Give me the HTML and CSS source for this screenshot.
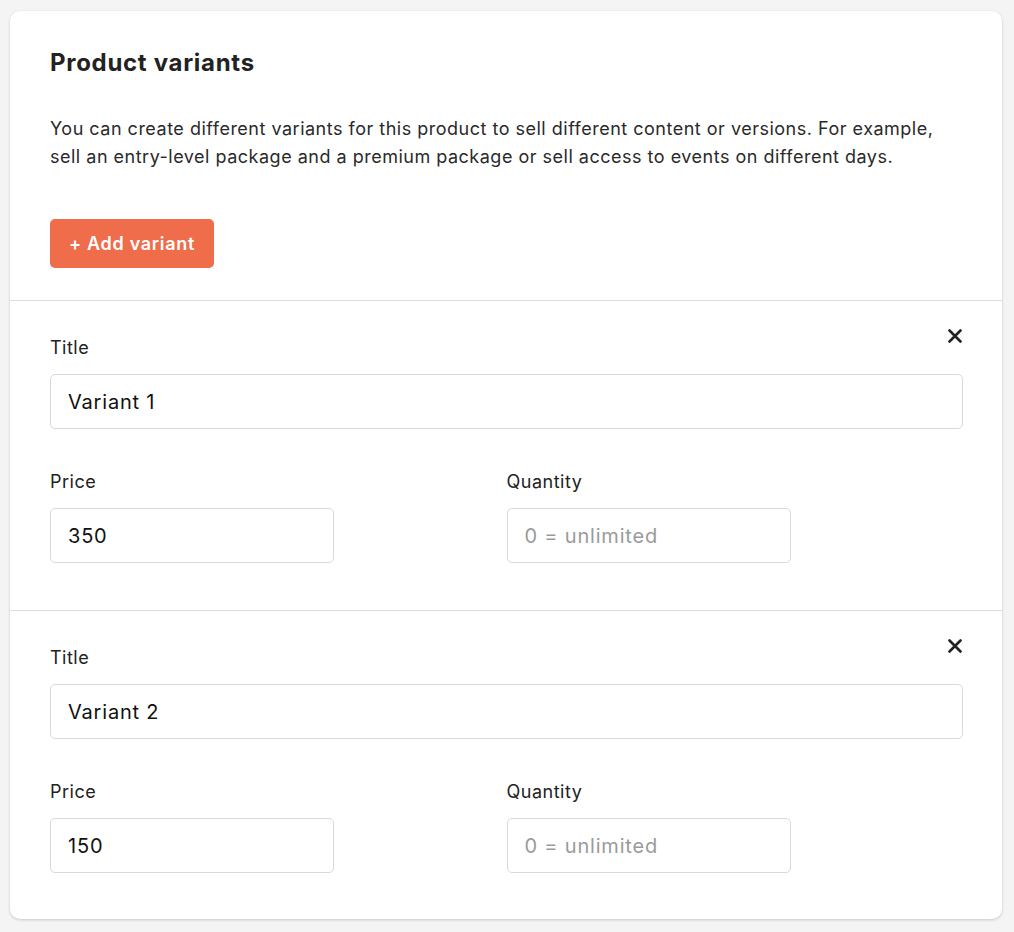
FILE: index.html
```html
<!DOCTYPE html>
<html lang="en">
<head>
    <meta charset="UTF-8">
    <meta name="viewport" content="width=device-width, initial-scale=1.0">
    <title>Product variants</title>
    <link rel="stylesheet" href="styles.css">
</head>
<body>
    <div class="card">
        <div class="card_head">
            <h2>Product variants</h2>
            <p>You can create different variants for this product to sell different content or versions. For example, sell an entry-level package and a premium package or sell access to events on different days.</p>
            <button class="add_btn">+ Add variant</button>
        </div>
        <div class="variant">
            <button class="remove_btn" aria-label="Remove">
                <svg width="14" height="14" viewBox="0 0 14 14"><path d="M1.5 1.5 L12.5 12.5 M12.5 1.5 L1.5 12.5" stroke="#222" stroke-width="2.6" stroke-linecap="round"/></svg>
            </button>
            <label class="field_label">Title</label>
            <input class="field" type="text" value="Variant 1">
            <div class="row">
                <div class="col">
                    <label class="field_label">Price</label>
                    <input class="field small" type="text" value="350">
                </div>
                <div class="col">
                    <label class="field_label">Quantity</label>
                    <input class="field small" type="text" placeholder="0 = unlimited">
                </div>
            </div>
        </div>
        <div class="variant">
            <button class="remove_btn" aria-label="Remove">
                <svg width="14" height="14" viewBox="0 0 14 14"><path d="M1.5 1.5 L12.5 12.5 M12.5 1.5 L1.5 12.5" stroke="#222" stroke-width="2.6" stroke-linecap="round"/></svg>
            </button>
            <label class="field_label">Title</label>
            <input class="field" type="text" value="Variant 2">
            <div class="row">
                <div class="col">
                    <label class="field_label">Price</label>
                    <input class="field small" type="text" value="150">
                </div>
                <div class="col">
                    <label class="field_label">Quantity</label>
                    <input class="field small" type="text" placeholder="0 = unlimited">
                </div>
            </div>
        </div>
    </div>
</body>
</html>
```
FILE: styles.css
```css
*{margin:0; padding:0; box-sizing: border-box;}
body{
    background-color: #f4f4f4;
    color: #222;
    font-family: Inter, "Noto Sans", sans-serif;
    padding: 11px 12px 12px 10px;
}
.card{
    width: 992px;
    background-color: white;
    border-radius: 10px;
    box-shadow: 0 1px 3px rgba(0,0,0,0.18);
}
.card_head{
    padding: 37px 40px 32px 40px;
    border-bottom: 1px solid #dcdcdc;
}
.card_head h2{
    font-size: 24px;
    line-height: 30px;
    font-weight: 700;
    letter-spacing: 0.7px;
}
.card_head p{
    margin-top: 37px;
    font-size: 18px;
    line-height: 28px;
    letter-spacing: 0.5px;
    color: #2a2a2a;
}
.add_btn{
    margin-top: 48px;
    width: 164px;
    height: 49px;
    border: none;
    border-radius: 5px;
    background-color: #ef6d4b;
    color: white;
    font-family: inherit;
    font-size: 18px;
    font-weight: 600;
    letter-spacing: 0.7px;
    cursor: pointer;
}
.variant{
    position: relative;
    padding: 35px 39px 47px 40px;
    border-bottom: 1px solid #dcdcdc;
}
.variant:last-child{
    border-bottom: none;
    padding-bottom: 46px;
}
.remove_btn{
    position: absolute;
    top: 28px;
    right: 40px;
    width: 14px;
    height: 14px;
    border: none;
    background: none;
    cursor: pointer;
    display: flex;
}
.field_label{
    display: block;
    font-size: 18px;
    line-height: 24px;
    letter-spacing: 0.5px;
    margin-bottom: 14px;
}
.field{
    display: block;
    width: 100%;
    height: 55px;
    border: 1px solid #d9d9d9;
    border-radius: 5px;
    padding: 0 17px;
    font-family: inherit;
    font-size: 20px;
    letter-spacing: 0.8px;
    color: #111;
    outline: none;
}
.field::placeholder{
    color: #9a9a9a;
}
.field.small{
    width: 284px;
}
.row{
    display: grid;
    grid-template-columns: 1fr 1fr;
    margin-top: 41px;
}
```
